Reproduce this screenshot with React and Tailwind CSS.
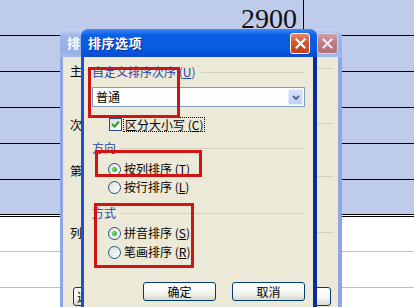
const cjk = "font-['Noto_Sans_CJK_SC','Noto_Sans',sans-serif]"

function CloseBox({ active }) {
  return (
    <div
      className={
        active
          ? 'w-[20px] h-[21px] rounded-[3px] border border-white bg-[linear-gradient(to_bottom,#e8866a,#d5552f_45%,#c2401c)] flex items-center justify-center'
          : 'w-[21px] h-[21px] rounded-[3px] border border-[#d9d2e6] bg-[linear-gradient(to_bottom,#cf9ea6,#b97a84_50%,#b3717c)] flex items-center justify-center'
      }
    >
      <svg width="11" height="11" viewBox="0 0 11 11">
        <path d="M1.5 1.5 L9.5 9.5 M9.5 1.5 L1.5 9.5" stroke={active ? '#fff' : '#f3ecf2'} strokeWidth="2" strokeLinecap="square" />
      </svg>
    </div>
  )
}

function GroupLabel({ children, gap = 'ml-[4px]', className = '' }) {
  return (
    <div className={`flex items-center h-[14px] ${className}`}>
      <span className="text-[#2a45a6] whitespace-nowrap">{children}</span>
      <div className={`flex-1 h-px bg-[#d0d0bf] ${gap}`} />
    </div>
  )
}

function Radio({ checked, children, className = '' }) {
  return (
    <div className={`flex items-center h-[16px] pl-[16px] gap-[3px] ${className}`}>
      <div className="w-[13px] h-[13px] rounded-full border border-[#1c5180] bg-[linear-gradient(135deg,#dcdcd7,#ffffff)] flex items-center justify-center">
        {checked && <div className="w-[5px] h-[5px] rounded-full bg-[radial-gradient(circle_at_35%_35%,#70e06a,#21a121)]" />}
      </div>
      <span className="whitespace-nowrap text-black">{children}</span>
    </div>
  )
}

function XpButton({ children, className = '' }) {
  return (
    <div className={`h-[19px] rounded-[3px] border border-[#003c74] bg-[linear-gradient(to_bottom,#ffffff,#f4f4f0_60%,#dcd8cc)] flex items-center justify-center text-black ${className}`}>
      {children}
    </div>
  )
}

export default function App() {
  return (
    <div className={`relative w-[414px] h-[307px] overflow-hidden bg-[#bfcbea] text-[12px] leading-[14px] ${cjk}`}>
      {/* sheet rows */}
      <div className="h-[36px] border-b border-black flex">
        <div className="w-[304px] border-r border-black flex justify-end pr-[6px] pt-[5px] font-['Liberation_Serif',serif] text-[28px] leading-[28px] text-[#111]">
          2900
        </div>
      </div>
      <div className="h-[36px] border-b border-black" />
      <div className="h-[36px] border-b border-black" />
      <div className="h-[36px] border-b border-black" />
      <div className="h-[36px] border-b border-black" />
      <div className="h-[35px] border-b border-black" />
      <div className="bg-white">
        <div className="h-[2px] border-b border-black" />
        <div className="h-[35px] border-b border-[#c0c0c0]" />
        <div className="h-[36px] border-b border-[#c0c0c0]" />
        <div className="h-[30px]" />
      </div>

      {/* back window */}
      <div className="absolute left-[60px] top-[29px] w-[282px] h-[290px] rounded-t-[7px] overflow-hidden flex flex-col">
        <div className="h-[28px] shrink-0 flex items-center justify-between pl-[7px] pr-[4px] bg-[linear-gradient(to_bottom,#c3d1f3,#9fb5ea_25%,#97aee6_80%,#a7bcee)]">
          <span className="text-white font-bold text-[13px]">排</span>
          <CloseBox />
        </div>
        <div className="flex-1 flex bg-[#ece9d8] border-l-[3px] border-r-[4px] border-[#8fa6e2]">
          <div className="w-[18px] flex flex-col pl-[7px] text-black">
            <span className="mt-[7px] h-[14px]">主</span>
            <span className="mt-[40px] h-[14px]">次</span>
            <span className="mt-[32px] h-[14px]">第</span>
            <span className="mt-[48px] h-[14px]">列</span>
            <XpButton className="mt-[47px] ml-[3px] w-[60px] justify-start pl-[3px]">选项...</XpButton>
          </div>
          <div className="ml-auto w-[37px] flex flex-col">
            <div className="mt-[11px] ml-[16px] w-[16px] h-px bg-[#d0d0bf]" />
            <div className="mt-[54px] ml-[16px] w-[16px] h-px bg-[#d0d0bf]" />
            <div className="mt-[52px] ml-[16px] w-[16px] h-px bg-[#d0d0bf]" />
            <div className="mt-[55px] ml-[16px] w-[16px] h-px bg-[#d0d0bf]" />
            <XpButton className="mt-[54px] w-[30px] h-[18px]" />
          </div>
        </div>
      </div>

      {/* front window */}
      <div className="absolute left-[81px] top-[29px] w-[236px] h-[290px] rounded-t-[7px] overflow-hidden flex flex-col">
        <div className="h-[28px] shrink-0 flex items-center justify-between pl-[7px] pr-[7px] bg-[linear-gradient(to_bottom,#3d8af7,#0a5fe4_22%,#0958e0_75%,#0a4bd0)]">
          <span className="text-white font-bold text-[13px] tracking-[0.5px] [text-shadow:1px_1px_0_#0a2f9a]">排序选项</span>
          <CloseBox active />
        </div>
        <div className="flex-1 flex flex-col bg-[#ece9d8] border-l-[3px] border-l-[#1a4fd6] border-r-[4px] border-r-[#0b2d9a] px-[8px] pt-[8px]">
          <GroupLabel gap="ml-[6px]">
            自定义排序次序 (<span className="underline">U</span>)
          </GroupLabel>
          <div className="mt-[8px] h-[20px] border border-[#7f9db9] bg-white flex items-center justify-between pl-[3px] pr-[1px]">
            <span className="text-black">普通</span>
            <div className="w-[15px] h-[16px] rounded-[2px] bg-[linear-gradient(to_bottom,#d6e2fd,#bcd0fa)] border border-[#e3ebfd] flex items-center justify-center">
              <svg width="8" height="5" viewBox="0 0 8 5">
                <path d="M1 1 L4 4 L7 1" stroke="#4d6185" strokeWidth="1.8" fill="none" />
              </svg>
            </div>
          </div>
          <div className="mt-[9px] h-[16px] pl-[17px] flex items-center">
            <div className="w-[13px] h-[13px] border border-[#1c5180] bg-[linear-gradient(135deg,#dcdcd7,#ffffff)] flex items-center justify-center">
              <svg width="11" height="11" viewBox="0 0 11 11">
                <path d="M2 5 L4.5 7.5 L9 2.5" stroke="#21a121" strokeWidth="2" fill="none" />
              </svg>
            </div>
            <span className="ml-[1px] border border-dotted border-black pl-[1px] pr-[1px] text-black whitespace-nowrap leading-[13px]">
              区分大小写 (<span className="underline">C</span>)
            </span>
          </div>
          <GroupLabel className="mt-[9px]">方向</GroupLabel>
          <Radio checked className="mt-[6px]">
            按列排序 (<span className="underline">T</span>)
          </Radio>
          <Radio className="mt-[2px]">
            按行排序 (<span className="underline">L</span>)
          </Radio>
          <GroupLabel className="mt-[11px]">方式</GroupLabel>
          <Radio checked className="mt-[5px]">
            拼音排序 (<span className="underline">S</span>)
          </Radio>
          <Radio className="mt-[3px]">
            笔画排序 (<span className="underline">R</span>)
          </Radio>
          <div className="mt-[22px] flex justify-end gap-[16px]">
            <XpButton className="w-[73px]">确定</XpButton>
            <XpButton className="w-[73px]">取消</XpButton>
          </div>
        </div>
      </div>

      {/* red annotation boxes */}
      <div className="absolute left-[88px] top-[67px] w-[92px] h-[51px] border-[3px] border-[#d01414]" />
      <div className="absolute left-[95px] top-[150px] w-[107px] h-[27px] border-[3px] border-[#d01414]" />
      <div className="absolute left-[94px] top-[203px] w-[100px] h-[65px] border-[3px] border-[#d01414]" />
    </div>
  )
}
